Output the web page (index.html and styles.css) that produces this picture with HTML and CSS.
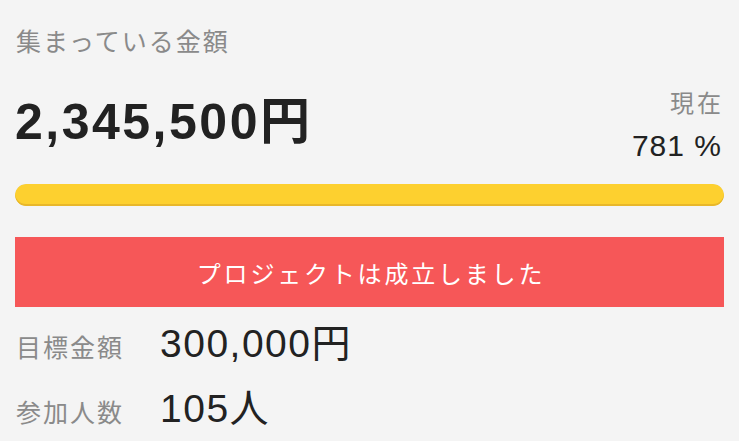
FILE: index.html
```html
<!DOCTYPE html>
<html lang="ja">
<head>
<meta charset="utf-8">
<link rel="stylesheet" href="styles.css">
</head>
<body>
<div class="wrap">
  <div class="label">集まっている金額</div>
  <div class="amount-row">
    <div class="amount">2,345,500円</div>
    <div class="rate">
      <div class="rate-label">現在</div>
      <div class="rate-value">781 %</div>
    </div>
  </div>
  <div class="bar"><div class="bar-fill" style="width:100%"></div></div>
  <div class="status">プロジェクトは成立しました</div>
  <div class="info">
    <div class="info-row"><span class="info-label">目標金額</span><span class="info-value">300,000円</span></div>
    <div class="info-row"><span class="info-label">参加人数</span><span class="info-value">105人</span></div>
  </div>
</div>
</body>
</html>
```
FILE: styles.css
```css
html, body {
  margin: 0;
  padding: 0;
  background: #f4f4f4;
}
body {
  font-family: "Liberation Sans", "Noto Sans CJK JP", sans-serif;
  color: #222;
}
.wrap {
  padding: 25px 15px 0 15px;
}
.label {
  font-size: 25px;
  line-height: 34px;
  letter-spacing: 2px;
  color: #8a8a8a;
  padding-left: 1px;
}
.amount-row {
  display: flex;
  justify-content: space-between;
  align-items: flex-end;
  margin-top: 25px;
}
.amount {
  font-size: 50px;
  font-weight: 700;
  line-height: 76px;
  letter-spacing: 2.5px;
  color: #222;
}
.rate {
  text-align: right;
  padding-right: 3px;
}
.rate-label {
  font-size: 24px;
  line-height: 30px;
  color: #8a8a8a;
  letter-spacing: 3px;
  margin-right: -3px;
}
.rate-value {
  margin-top: 12px;
  font-size: 30px;
  line-height: 29px;
  color: #222;
  letter-spacing: 1px;
  margin-right: -1px;
}
.bar {
  margin-top: 24px;
  height: 22px;
  border-radius: 11px;
  background: #e0e0e0;
  overflow: hidden;
}
.bar-fill {
  height: 100%;
  background: #fdd02f;
  border-radius: 11px;
  box-shadow: inset 0 -2px 0 #e8b72a;
}
.status {
  margin-top: 31px;
  height: 70px;
  background: #f65758;
  color: #fff;
  font-size: 24px;
  letter-spacing: 2.8px;
  padding-left: 3px;
  display: flex;
  align-items: center;
  justify-content: center;
}
.info {
  margin-top: 4px;
}
.info-row {
  display: flex;
  align-items: baseline;
}
.info-label {
  width: 145px;
  flex: none;
  font-size: 25px;
  line-height: 30px;
  letter-spacing: 2px;
  color: #8a8a8a;
  padding-left: 1px;
  box-sizing: border-box;
}
.info-value {
  font-size: 39px;
  line-height: 65px;
  letter-spacing: 1.5px;
  color: #222;
}
```
